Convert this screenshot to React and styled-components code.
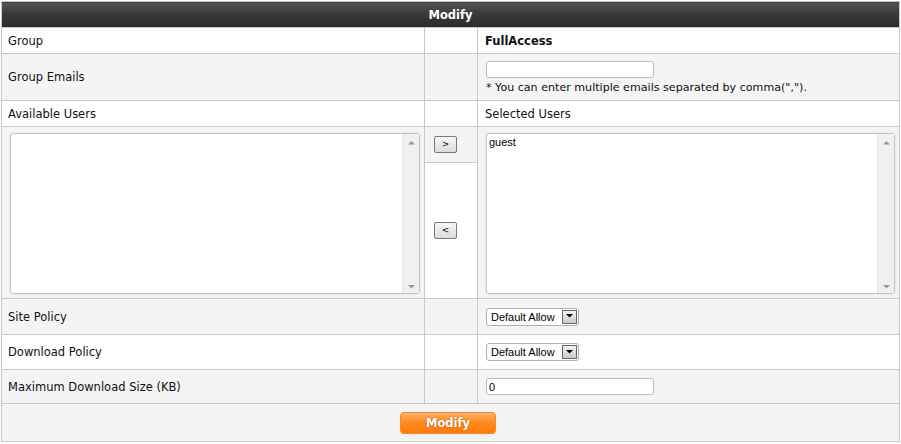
import React from 'react';
import styled, { createGlobalStyle } from 'styled-components';

const GlobalStyle = createGlobalStyle`
  body {
    margin: 0;
    background: #fff;
    font-family: "DejaVu Sans", Verdana, sans-serif;
  }
`;

const Page = styled.div`
  padding: 1px 0 0 1px;
`;

const Table = styled.table`
  width: 899px;
  border-collapse: collapse;
  border: 1px solid #c8c8c8;
  font-size: 11.5px;
  color: #111;
`;

const HeadCell = styled.th`
  height: 25px;
  padding: 0;
  background: linear-gradient(#555 0%, #3a3a3a 45%, #2a2a2a 100%);
  color: #fff;
  font-weight: bold;
  font-size: 11.5px;
  text-align: center;
  border: 1px solid #c8c8c8;
`;

const Row = styled.tr`
  background: ${({ $alt }) => ($alt ? '#f4f4f4' : '#fff')};
`;

const Cell = styled.td`
  height: ${({ $h }) => $h}px;
  padding: 0 6px;
  border: 1px solid #c8c8c8;
  vertical-align: middle;
  text-align: ${({ $center }) => ($center ? 'center' : 'left')};
  width: ${({ $w }) => ($w ? `${$w}px` : 'auto')};
  font-weight: ${({ $bold }) => ($bold ? 'bold' : 'normal')};
`;

const ValueCell = styled(Cell)`
  padding-left: 7px;
`;

const ButtonCell = styled(Cell)`
  padding: 0 0 0 9px;
`;

const ListCell = styled(Cell)`
  padding: 6px 4px 4px 8px;
  vertical-align: top;
`;

const Note = styled.div`
  margin-top: 3px;
  margin-left: 1px;
  font-size: 11.1px;
`;

const TextInput = styled.input`
  display: block;
  box-sizing: border-box;
  width: 168px;
  height: 17px;
  margin: 0 0 0 1px;
  padding: 0 2px;
  border: 1px solid #bdbdbd;
  border-radius: 3px;
  background: #fff;
  font-family: "Liberation Sans", Arial, sans-serif;
  font-size: 11px;
  color: #000;
  outline: none;
`;

const ListBox = styled.div`
  display: flex;
  box-sizing: border-box;
  height: 161px;
  border: 1px solid #c4c4c4;
  border-radius: 3px;
  background: #fff;
  box-shadow: 0 0 2px rgba(0, 0, 0, 0.12);
  font-family: "Liberation Sans", Arial, sans-serif;
  font-size: 11px;
  color: #000;
`;

const ListItems = styled.div`
  flex: 1;
  padding: 1px 2px;
  line-height: 14px;
`;

const ScrollTrack = styled.div`
  width: 16px;
  display: flex;
  flex-direction: column;
  justify-content: space-between;
  align-items: center;
  background: #f0f0f0;
  border-left: 1px solid #e6e6e6;
  padding: 6px 0 4px;
`;

const SmallButton = styled.button`
  display: block;
  width: 23px;
  height: 17px;
  padding: 0;
  border: 1px solid #7a7a7a;
  border-radius: 2px;
  background: linear-gradient(#f6f6f6, #dcdcdc);
  font-family: "DejaVu Sans", Verdana, sans-serif;
  font-size: 9px;
  line-height: 13px;
  color: #000;
`;

const SelectBox = styled.div`
  display: inline-flex;
  align-items: center;
  box-sizing: border-box;
  width: 93px;
  height: 18px;
  margin-left: 1px;
  padding: 0 1px 0 4px;
  border: 1px solid #b0b0b0;
  border-radius: 3px;
  background: #fff;
  font-family: "Liberation Sans", Arial, sans-serif;
  font-size: 11px;
  color: #000;
`;

const SelectText = styled.span`
  flex: 1;
`;

const SelectArrow = styled.span`
  display: flex;
  align-items: center;
  justify-content: center;
  width: 15px;
  height: 14px;
  box-sizing: border-box;
  border: 1px solid #666;
  background: linear-gradient(#f4f4f4, #c9c9c9);
`;

const SubmitButton = styled.button`
  width: 96px;
  height: 22px;
  margin-right: 5px;
  padding: 0;
  border: 1px solid #f58a2c;
  border-radius: 4px;
  background: linear-gradient(#ffb267 0%, #ff8a22 45%, #ff7a0c 100%);
  color: #fff;
  font-family: "DejaVu Sans", Verdana, sans-serif;
  font-size: 11.5px;
  font-weight: bold;
  text-shadow: 0 0 2px rgba(160, 60, 0, 0.6);
`;

const Arrow = ({ up, size = 7, color = '#999' }) => (
  <svg width={size} height={size / 2 + 1} viewBox="0 0 8 5">
    <path d={up ? 'M0 5 L4 1 L8 5 Z' : 'M0 0 L8 0 L4 4 Z'} fill={color} />
  </svg>
);

const UserList = ({ items }) => (
  <ListBox>
    <ListItems>
      {items.map((u) => (
        <div key={u}>{u}</div>
      ))}
    </ListItems>
    <ScrollTrack>
      <Arrow up />
      <Arrow />
    </ScrollTrack>
  </ListBox>
);

const PolicySelect = () => (
  <SelectBox>
    <SelectText>Default Allow</SelectText>
    <SelectArrow>
      <Arrow size={7} color="#000" />
    </SelectArrow>
  </SelectBox>
);

export default function App() {
  return (
    <Page>
      <GlobalStyle />
      <Table>
        <thead>
          <tr>
            <HeadCell colSpan={3}>Modify</HeadCell>
          </tr>
        </thead>
        <tbody>
          <Row>
            <Cell $h={25} $w={410}>Group</Cell>
            <Cell $w={40} />
            <ValueCell $bold>FullAccess</ValueCell>
          </Row>
          <Row $alt>
            <Cell $h={46}>Group Emails</Cell>
            <Cell />
            <ValueCell>
              <TextInput type="text" defaultValue="" />
              <Note>* You can enter multiple emails separated by comma(",").</Note>
            </ValueCell>
          </Row>
          <Row>
            <Cell $h={25}>Available Users</Cell>
            <Cell />
            <ValueCell>Selected Users</ValueCell>
          </Row>
          <Row $alt>
            <ListCell rowSpan={2}>
              <UserList items={[]} />
            </ListCell>
            <ButtonCell $h={35}>
              <SmallButton>&gt;</SmallButton>
            </ButtonCell>
            <ListCell rowSpan={2}>
              <UserList items={['guest']} />
            </ListCell>
          </Row>
          <Row>
            <ButtonCell $h={135}>
              <SmallButton>&lt;</SmallButton>
            </ButtonCell>
          </Row>
          <Row $alt>
            <Cell $h={35}>Site Policy</Cell>
            <Cell />
            <ValueCell>
              <PolicySelect />
            </ValueCell>
          </Row>
          <Row>
            <Cell $h={34}>Download Policy</Cell>
            <Cell />
            <ValueCell>
              <PolicySelect />
            </ValueCell>
          </Row>
          <Row $alt>
            <Cell $h={33}>Maximum Download Size (KB)</Cell>
            <Cell />
            <ValueCell>
              <TextInput type="text" defaultValue="0" />
            </ValueCell>
          </Row>
          <Row $alt>
            <Cell $h={37} colSpan={3} $center>
              <SubmitButton>Modify</SubmitButton>
            </Cell>
          </Row>
        </tbody>
      </Table>
    </Page>
  );
}
